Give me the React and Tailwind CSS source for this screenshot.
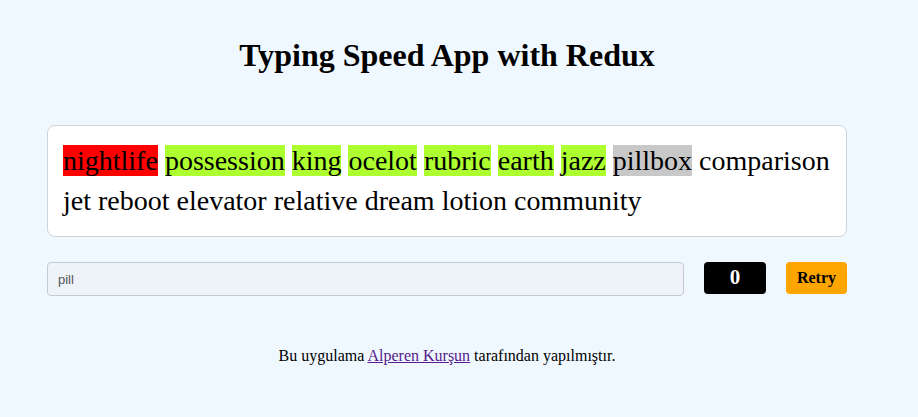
const words = [
  { text: 'nightlife', state: 'wrong' },
  { text: 'possession', state: 'right' },
  { text: 'king', state: 'right' },
  { text: 'ocelot', state: 'right' },
  { text: 'rubric', state: 'right' },
  { text: 'earth', state: 'right' },
  { text: 'jazz', state: 'right' },
  { text: 'pillbox', state: 'current' },
  { text: 'comparison' },
  { text: 'jet' },
  { text: 'reboot' },
  { text: 'elevator' },
  { text: 'relative' },
  { text: 'dream' },
  { text: 'lotion' },
  { text: 'community' },
];

const stateClass = {
  wrong: 'bg-[#ff0000]',
  right: 'bg-[#adff2f]',
  current: 'bg-[#c8c8c8]',
};

export default function App() {
  return (
    <div className="min-h-[417px] bg-[#f0f8ff] font-['Liberation_Serif',serif] text-black">
      <div className="ml-[47px] w-[800px] pt-[37px]">
        <h1 className="text-center text-[32px] font-bold leading-[37px]">Typing Speed App with Redux</h1>

        <div className="mt-[51px] rounded-lg border border-[#cfd4da] bg-white px-[15px] py-[15px] text-[28px] leading-[40px]">
          {words.map((w, i) => (
            <span key={i}>
              <span className={stateClass[w.state] || ''}>{w.text}</span>{' '}
            </span>
          ))}
        </div>

        <div className="mt-[25px] flex items-start gap-5">
          <input
            readOnly
            value="pill"
            className="h-[34px] flex-1 rounded border border-[#c6cbd1] bg-[#eef3f9] px-[10px] font-['Liberation_Sans',sans-serif] text-[13px] text-[#555] outline-none"
          />
          <div className="flex h-[32px] w-[62px] items-center justify-center rounded bg-black text-[21px] font-bold text-white">0</div>
          <button className="h-[32px] w-[61px] rounded bg-[#ffa500] text-[16px] font-bold text-black">Retry</button>
        </div>

        <p className="mt-[48px] text-center text-[16px] leading-[24px]">
          Bu uygulama <a href="#" className="text-[#551a8b] underline">Alperen Kurşun</a> tarafından yapılmıştır.
        </p>
      </div>
    </div>
  );
}
